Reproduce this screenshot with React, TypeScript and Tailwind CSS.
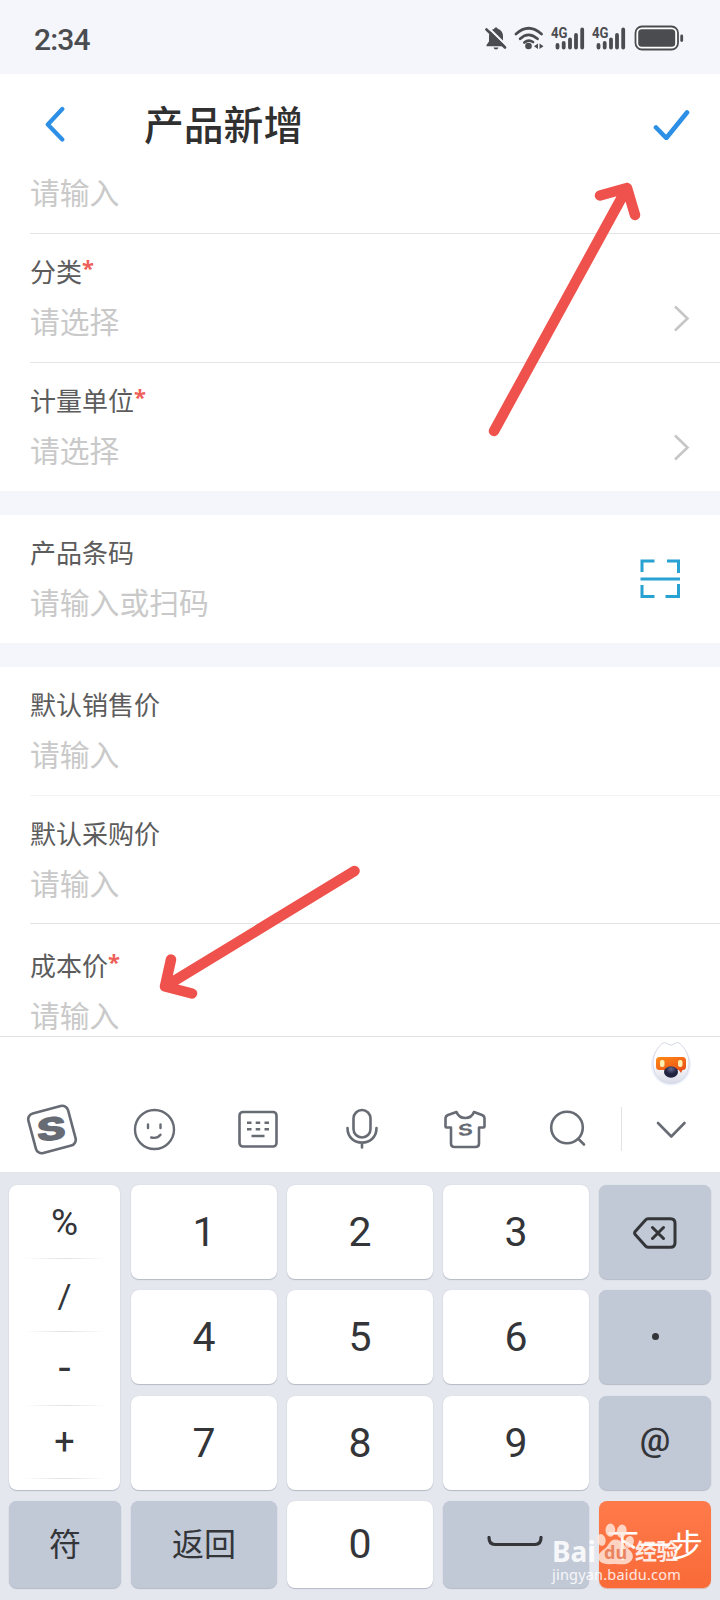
import React from "react";

type FieldProps = {
  label: string;
  placeholder: string;
  required?: boolean;
  border?: string;
  className?: string;
  children?: React.ReactNode;
};

const Field = ({ label, placeholder, required, border, className, children }: FieldProps) => {
  return (
    <div className={`ml-[30px] flex shrink-0 justify-between ${border ? `border-t ${border}` : ""} ${className ?? "h-[129px]"}`}>
      <div className="pt-[19px]">
        <div className="flex text-[26px] leading-9 text-[#5c5c5c]">
          <span>{label}</span>
          {required && <span className="-mt-[4px] font-['Noto_Sans'] text-[22px] font-bold text-[#ee5f58]">*</span>}
        </div>
        <div className="mt-[11px] text-[29.8px] leading-10 text-[#c9c9c9]">{placeholder}</div>
      </div>
      {children}
    </div>
  );
};

const Arrow = () => (
  <svg className="mt-[70px] mr-[30px] h-7 w-4" viewBox="0 0 16 28" fill="none" stroke="#c6c6c6" strokeWidth="2.6">
    <path d="M1 2.500 13.500 14.500 1 26.500" />
  </svg>
);

const Signal = () => (
  <svg className="h-6 w-[34px] overflow-visible" viewBox="0 0 34 24" stroke="#4b4c4f" strokeWidth="3.800" strokeLinecap="round">
    <text x="0" y="11.500" fill="#4b4c4f" stroke="none" fontSize="15" fontWeight="700" fontFamily="Roboto" textLength="16.500" lengthAdjust="spacingAndGlyphs">4G</text>
    <path d="M6.500 19v2.500M12.700 17v4.500M19 13.500v8M25 9v12.500M31.200 3.500v18" />
  </svg>
);

const StatusBar = () => (
  <div className="flex h-[74px] items-center justify-between bg-[#f4f6fb] pr-[36px] pl-[34px] text-[#4b4c4f]">
    <div className="pt-[5px] font-[Roboto] text-[30px] leading-none font-medium tracking-[-0.800px]">2:34</div>
    <div className="flex items-center pt-px">
      <svg className="h-6 w-[22px]" viewBox="0 0 22 24" fill="#4b4c4f">
        <path d="M11 1.500c-.9 0-1.500.5-1.700 1.300C6 3.800 4 6.500 4 10v5.500L1.500 19v1.200h19V19L18 15.500V10c0-3.500-2-6.200-5.300-7.200-.2-.8-.8-1.300-1.700-1.300zM8.500 21.500c.4 1.300 1.300 2 2.500 2s2.100-.7 2.500-2z" />
        <path d="M3.200 1.500 22 20" stroke="#f4f6fb" strokeWidth="2.200" />
        <path d="M1.500 3.500 20 21.500" stroke="#4b4c4f" strokeWidth="2.600" strokeLinecap="round" />
      </svg>
      <svg className="ml-[7px] h-6 w-[30px]" viewBox="0 0 30 24" fill="none" stroke="#4b4c4f" strokeWidth="2.700" strokeLinecap="round">
        <path d="M2 8Q14.500-3.500 27.500 8M6.200 12.800Q14.500 5 23.500 12.800" />
        <path d="M10.300 16.500Q14.500 13 19 16" />
        <circle cx="14.500" cy="20" r="3.300" fill="#4b4c4f" stroke="none" />
        <path d="M24 17.500v5.500l-4-2.700zM25.500 17.500v5.500l4-2.700z" fill="#4b4c4f" stroke="none" />
      </svg>
      <div className="ml-[7px] flex gap-[7px]">
        <Signal />
        <Signal />
      </div>
      <svg className="ml-2 h-[26px] w-[50px]" viewBox="0 0 50 26">
        <rect x="1.500" y="1.500" width="42.500" height="23" rx="6.500" fill="#fff" stroke="#4b4c4f" strokeWidth="1.800" />
        <rect x="4.200" y="4.200" width="37" height="17.600" rx="3.500" fill="#4b4c4f" />
        <path d="M47.700 11v4.500" stroke="#4b4c4f" strokeWidth="2.800" strokeLinecap="round" />
      </svg>
    </div>
  </div>
);

const Header = () => (
  <div className="flex h-[89px] items-center pt-[11px] pr-[30px] pl-[45px]">
    <svg className="h-9 w-5" viewBox="0 0 20 36" fill="none" stroke="#2d8fe5" strokeWidth="4.200" strokeLinecap="round" strokeLinejoin="round">
      <path d="M17.300 3 2.800 18.500l14.500 15" />
    </svg>
    <h1 className="-mt-[2px] ml-[79px] flex-1 text-[39.800px] leading-[56px] font-medium text-[#303030]">产品新增</h1>
    <svg className="h-8 w-[38px]" viewBox="0 0 38 32" fill="none" stroke="#2d8fe5" strokeWidth="4.600" strokeLinecap="round" strokeLinejoin="round">
      <path d="M4 19.500 14.300 30 35 4.500" />
    </svg>
  </div>
);

const Toolbar = () => (
  <div className="flex items-center pt-[14px]">
    <div className="grid grid-cols-[repeat(6,103.3px)] justify-items-center">
      <svg className="h-[52px] w-[52px]" viewBox="0 0 52 52">
        <rect x="5.500" y="6" width="41" height="41" rx="6" transform="rotate(-15 26 26.500)" fill="none" stroke="#676b73" strokeWidth="2.600" />
        <text transform="translate(25.500 37.500) rotate(-6) skewX(-4) scale(1.400 1)" textAnchor="middle" fontSize="32" fontWeight="900" fontFamily="Inter" fill="#676b73">S</text>
      </svg>
      <svg className="h-[52px] w-[52px]" viewBox="0 0 52 52" fill="none" stroke="#676b73" strokeWidth="2.400" strokeLinecap="round">
        <circle cx="25.500" cy="26.500" r="19.500" />
        <path d="M19 21.500v3.500M31.500 21.500v3.500M22.200 34.500q6 1.500 9.300-2.700" />
      </svg>
      <svg className="h-[52px] w-[52px]" viewBox="0 0 52 52" fill="none" stroke="#676b73" strokeWidth="2.600">
        <rect x="7.500" y="9" width="37" height="34.500" rx="3.500" />
        <path d="M15 19.700h4.500M23.700 19.700h4.500M32.500 19.700H37M15 26.300h4.500M23.700 26.300h4.500M32.500 26.300H37M19.500 33h13" />
      </svg>
      <svg className="h-[52px] w-[52px]" viewBox="0 0 52 52" fill="none" stroke="#676b73" strokeWidth="2.600" strokeLinecap="round">
        <rect x="17.500" y="7" width="17" height="27.500" rx="8.500" />
        <path d="M11.500 25c0 19.500 29 19.500 29 0M26 39.500v5" />
      </svg>
      <svg className="h-[52px] w-[52px]" viewBox="0 0 52 52" fill="none" stroke="#676b73" strokeWidth="2.600" strokeLinejoin="round">
        <path d="M17.500 9 9 12q-2.500 1-2.500 3.500V23.500q0 1 1 1h4.500v16q0 3.500 3.500 3.500h21q3.500 0 3.500-3.500V24.500h4.500q1 0 1-1v-8q0-2.500-2.500-3.500L35 9c-3 8-14.500 8-17.500 0z" />
        <text transform="translate(26.500 32.500) rotate(-6) skewX(-4) scale(1.450 1)" textAnchor="middle" fontSize="16" fontWeight="700" fontFamily="Inter" fill="#676b73" stroke="none">S</text>
      </svg>
      <svg className="h-[52px] w-[52px]" viewBox="0 0 52 52" fill="none" stroke="#676b73" strokeWidth="2.600" strokeLinecap="round">
        <circle cx="25" cy="24.500" r="15.800" />
        <path d="m36.500 36 5.500 5.500" />
      </svg>
    </div>
    <div className="ml-[1.500px] h-11 w-px bg-[#e0e2e6]" />
    <div className="flex flex-1 justify-center">
      <svg className="h-5 w-8" viewBox="0 0 32 20" fill="none" stroke="#676b73" strokeWidth="2.600" strokeLinecap="round" strokeLinejoin="round">
        <path d="M3 4 16.300 17.500 29.500 4" />
      </svg>
    </div>
  </div>
);

const Mascot = () => (
  <svg className="mt-1 mr-[26px] ml-auto block h-12 w-[46px]" viewBox="0 0 46 48">
    <defs>
      <linearGradient id="face" x1="0" y1="0" x2="0" y2="1">
        <stop offset="0.5" stopColor="#fff" />
        <stop offset="1" stopColor="#d8dbe8" />
      </linearGradient>
      <radialGradient id="nose" cx="0.5" cy="0.25" r="0.7">
        <stop offset="0" stopColor="#656a91" />
        <stop offset="0.6" stopColor="#20233e" />
      </radialGradient>
      <linearGradient id="mask" x1="0" y1="0" x2="1" y2="1">
        <stop offset="0" stopColor="#ff8a14" />
        <stop offset="1" stopColor="#ea4f1b" />
      </linearGradient>
    </defs>
    <ellipse cx="23" cy="24" rx="20" ry="20.500" fill="#edf1fc" />
    <path d="M15 2c3-1.500 5 2 8 2s5-3.500 8-2c6 4 10.500 13 10 21C40.500 35 33 42.500 23 42.500S5.500 35 5 23C4.500 15 9 6 15 2z" fill="url(#face)" stroke="#d6d9e6" />
    <rect x="8" y="16" width="30" height="13" rx="3.500" fill="url(#mask)" />
    <path d="M30 28h5l-2 4z" fill="#e45421" />
    <rect x="12" y="19" width="4.500" height="7" rx="2" fill="#ffefb0" />
    <rect x="30" y="19" width="4.500" height="7" rx="2" fill="#ffefb0" />
    <ellipse cx="23" cy="31" rx="7" ry="5.800" fill="url(#nose)" />
  </svg>
);

type KeyProps = {
  children?: React.ReactNode;
  dark?: boolean;
  className?: string;
};

const Key = ({ children, dark, className }: KeyProps) => (
  <div
    className={`flex items-center justify-center rounded-lg text-[#333539] shadow-[0_1px_1px_#b5bac5,0_0_1px_#c3c7d1] ${
      dark ? "bg-[#c1c8d6]" : "bg-white"
    } ${className ?? "pt-px font-[Roboto] text-[41px] leading-none"}`}
  >
    {children}
  </div>
);

const Divider = () => (
  <div className="mx-auto h-px w-[82px] bg-linear-to-r from-transparent via-[#dfe1e5] to-transparent" />
);

const symbols = [
  { char: "%", className: "text-[37px] pt-0.5" },
  { char: "/", className: "text-[34px] pt-0.5" },
  { char: "-", className: "text-[44px] pb-px" },
  { char: "+", className: "text-[36px] pt-px" },
];

const Keyboard = () => (
  <div className="grid h-[428px] grid-cols-[112px_146px_146px_146px_112px] grid-rows-[94px_94px_94px_87px] gap-x-[10px] gap-y-[11.300px] bg-[#e4e7ee] px-[9px] pt-[13px]">
    <div className="row-span-3 mr-px flex flex-col rounded-lg bg-white font-[Roboto] text-[#333539] shadow-[0_1px_1px_#b5bac5,0_0_1px_#c3c7d1]">
      {symbols.map((s) => (
        <React.Fragment key={s.char}>
          <div className={`flex h-[72.500px] items-center justify-center leading-none ${s.className}`}>{s.char}</div>
          <Divider />
        </React.Fragment>
      ))}
    </div>
    <Key>1</Key>
    <Key>2</Key>
    <Key>3</Key>
    <Key dark>
      <svg className="h-8 w-11" viewBox="0 0 44 32" fill="none" stroke="#333539" strokeWidth="3" strokeLinecap="round" strokeLinejoin="round">
        <path d="M15 1.800h22.500q4.500 0 4.500 4.500v19.400q0 4.500-4.500 4.500H15q-1.500 0-2.500-1.200L2.200 17.500q-1.200-1.500 0-3L12.500 3q1-1.200 2.500-1.200zM19.500 10.500l11 11M30.500 10.500l-11 11" />
      </svg>
    </Key>
    <Key>4</Key>
    <Key>5</Key>
    <Key>6</Key>
    <Key dark className="pb-px">
      <span className="h-[7px] w-[7px] rounded-full bg-[#333539]" />
    </Key>
    <Key>7</Key>
    <Key>8</Key>
    <Key>9</Key>
    <Key dark className="pb-[7px] font-[Roboto] text-[34px] leading-none font-medium">@</Key>
    <Key dark className="pb-1 text-[32px]">符</Key>
    <Key dark className="pb-1 text-[32px]">返回</Key>
    <Key>0</Key>
    <Key dark className="pr-0.5 pb-1">
      <svg className="h-3 w-14" viewBox="0 0 56 12" fill="none" stroke="#333539" strokeWidth="3.200" strokeLinecap="round">
        <path d="M2 1.500q0 7 6 7h40q6 0 6-7" />
      </svg>
    </Key>
    <div className="flex items-center justify-center rounded-lg bg-linear-to-b from-[#ff7a4a] to-[#f96a38] pb-0.5 text-[32px] whitespace-nowrap text-white shadow-[0_1px_1px_#d5b6ad]">下一步</div>
  </div>
);

const Watermark = () => (
  <div className="absolute top-[1520px] left-[552px] w-[140px] text-white/85">
    <div className="flex h-[46px] items-end">
      <span className="-mb-[2px] w-[44px] font-['Noto_Sans'] text-[28px] leading-[34px] font-bold">Bai</span>
      <div className="relative h-[44px] w-[38px]">
        <svg className="h-[44px] w-[38px]" viewBox="0 0 37 42" fill="#ffe9df" fillOpacity="0.82">
          <ellipse cx="5" cy="17" rx="4.300" ry="5.800" transform="rotate(-15 5 17)" />
          <ellipse cx="14" cy="7.500" rx="4.700" ry="6.500" />
          <ellipse cx="25" cy="8.500" rx="4.700" ry="6.500" transform="rotate(12 25 8.500)" />
          <ellipse cx="32.500" cy="19" rx="4.300" ry="5.800" transform="rotate(15 32.500 19)" />
          <path d="M19 16.500c6 0 8 6 12 9s7 7.500 3 12-9 3-15 3-12 1-15.500-3 0-8.500 4.500-11.500 5-9.500 11-9.500z" />
        </svg>
        <span className="absolute top-[20px] left-[8px] font-['Noto_Sans'] text-[18px] leading-5 font-bold text-[#e98360]">du</span>
      </div>
      <span className="ml-px text-[22px] leading-[34px] font-bold tracking-[-0.500px]">经验</span>
    </div>
    <div className="-mt-px font-['Noto_Sans'] text-[14.500px] leading-[18px] tracking-[0.200px]">jingyan.baidu.com</div>
  </div>
);

const App = () => {
  return (
    <div className="relative h-[1600px] w-[720px] overflow-hidden bg-white font-['Noto_Sans_CJK_SC',sans-serif]">
      <StatusBar />
      <Header />
      <div className="flex h-[873px] flex-col">
        <div className="ml-[30px] h-[70px] shrink-0 text-[29.800px] leading-[57px] text-[#c9c9c9]">请输入</div>
        <Field label="分类" placeholder="请选择" required border="border-[#e4e4e4]">
          <Arrow />
        </Field>
        <Field label="计量单位" placeholder="请选择" required border="border-[#e4e4e4]">
          <Arrow />
        </Field>
        <div className="h-6 shrink-0 bg-[#f4f6fb]" />
        <Field label="产品条码" placeholder="请输入或扫码" className="h-[128px]">
          <svg className="mt-[44px] mr-[40px] h-10 w-10" viewBox="0 0 40 40" fill="none" stroke="#28a2d2" strokeWidth="3">
            <path d="M2 13V2h12.500M27 2h11.500v12M2 26v11.500h12.500M25.500 37.500h13V25M.5 20H40" />
          </svg>
        </Field>
        <div className="h-6 shrink-0 bg-[#f4f6fb]" />
        <Field label="默认销售价" placeholder="请输入" className="h-[128px]" />
        <Field label="默认采购价" placeholder="请输入" border="border-[#f4f4f4]" className="h-[128px]" />
        <Field label="成本价" placeholder="请输入" required border="border-[#e4e4e4]" className="h-[112px] pt-1" />
      </div>
      <div className="h-[136px] border-t border-[#dfe1e3]">
        <Mascot />
        <Toolbar />
      </div>
      <Keyboard />

      {/* pointers to the save button and the cost field */}
      <svg className="absolute inset-0 h-[1040px] w-[720px]" viewBox="0 0 720 1040" fill="none" stroke="#ef524c" strokeWidth="10.500" strokeLinecap="round" strokeLinejoin="round">
        <path d="M494 431 627 188M600 195.500l27-7.500 8 27" />
        <path d="M354.500 871 165 986.500M171 959.500l-6 27 27 7" />
      </svg>
      <Watermark />
    </div>
  );
};

export default App;
